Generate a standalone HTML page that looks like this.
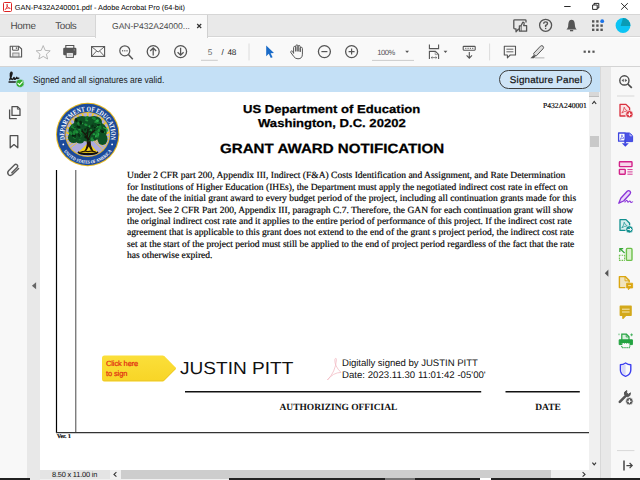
<!DOCTYPE html>
<html>
<head>
<meta charset="utf-8">
<title>GAN-P432A240001.pdf - Adobe Acrobat Pro (64-bit)</title>
<style>
*{box-sizing:border-box;margin:0;padding:0}
html,body{width:640px;height:480px;overflow:hidden;background:#fff}
body{position:relative;font-family:"Liberation Sans",sans-serif;color:#000;text-rendering:geometricPrecision}
.abs{position:absolute}
.t{position:absolute;white-space:nowrap;line-height:1}
svg{position:absolute;overflow:visible}
#titlebar{left:0;top:0;width:640px;height:14px;background:#fff}
#tabbar{left:0;top:14px;width:640px;height:23.4px;background:#e9e9e9;border-bottom:0.8px solid #d6d6d6;border-top:0.7px solid #d6d6d6}
#tab{left:95px;top:14.6px;width:113px;height:24px;background:#f9f9f9;border-right:1px solid #d0d0d0;border-left:1px solid #d6d6d6}
#toolbar{left:0;top:37.6px;width:640px;height:29.2px;background:#f9f9f9;border-bottom:0.8px solid #d4d4d4}
#banner{left:0;top:66.8px;width:600px;height:25px;background:#c4e0f6}
#leftnav{left:0;top:91.8px;width:27px;height:389px;background:#f8f8f8}
#leftgrip{left:27px;top:91.8px;width:13px;height:389px;background:#e8e8e8}
#page{left:40px;top:91.8px;width:549px;height:378.2px;background:#fff}
#vscroll{left:589px;top:91.8px;width:11px;height:378.2px;background:#f0f0f0}
#rightgrip{left:599.6px;top:66.8px;width:11px;height:414px;background:#e8e8e8;border-left:0.8px solid #d8d8d8}
#rightnav{left:610.5px;top:66.8px;width:29.5px;height:414px;background:#f8f8f8}
#hscroll{left:40px;top:470px;width:560px;height:10px;background:#f0f0f0}
.serif{font-family:"Liberation Serif",serif}
</style>
</head>
<body>
<div class="abs" id="titlebar"></div>
<div class="abs" id="tabbar"></div>
<div class="abs" id="tab"></div>
<div class="abs" id="toolbar"></div>
<div class="abs" id="banner"></div>
<div class="abs" id="leftnav"></div>
<div class="abs" id="leftgrip"></div>
<div class="abs" id="page"></div>
<div class="abs" id="vscroll"></div>
<div class="abs" id="rightgrip"></div>
<div class="abs" id="rightnav"></div>
<div class="abs" id="hscroll"></div>

<!-- TITLE BAR -->
<svg style="left:3px;top:2px" width="9" height="10" viewBox="0 0 9 10"><rect x="0.5" y="0.5" width="8" height="9" rx="1" fill="#fff" stroke="#d22" stroke-width="1"/><path d="M2.2 7.6 C3.6 6.2 4.6 3.6 4.3 2.4 C4 1.6 3.6 2.6 4.2 4 C4.9 5.6 6.2 6.6 7.2 6.4 C7.6 6 6 5.8 4.6 6.2 C3.4 6.5 2.4 7.1 2.2 7.6Z" fill="none" stroke="#d22" stroke-width="0.8"/></svg>
<div class="t" id="ttl" style="left:14.8px;top:3.7px;font-size:7.35px">GAN-P432A240001.pdf - Adobe Acrobat Pro (64-bit)</div>
<svg style="left:560px;top:0" width="80" height="14" viewBox="560 0 80 14" fill="none" stroke="#111" stroke-width="0.9">
<path d="M564.2 6.5H570.6"/>
<path d="M592.6 5H597.2V9.4H592.6Z M594 5V3.4H598.8V8H597.2"/>
<path d="M621.2 3.2L627.8 9.6M627.8 3.2L621.2 9.6"/>
</svg>

<!-- TAB BAR -->
<div class="t" id="home" style="left:10.4px;top:22.2px;font-size:9.9px;color:#4a4a4a;letter-spacing:-0.25px">Home</div>
<div class="t" id="tools" style="left:55.3px;top:22.2px;font-size:9.9px;color:#4a4a4a;letter-spacing:-0.4px">Tools</div>
<div class="t" id="tabtxt" style="left:112px;top:21.6px;font-size:8.55px;color:#4a4a4a">GAN-P432A24000...</div>
<svg style="left:195px;top:22px" width="8" height="8" viewBox="195 22 8 8" stroke="#333" stroke-width="1" fill="none"><path d="M197.2 24L201.2 28M201.2 24L197.2 28" stroke-width="1.2"/></svg>
<svg id="tabicons" style="left:500px;top:14px" width="140" height="24" viewBox="500 14 140 24" fill="none" stroke="#555" stroke-width="1.1">
<!-- feedback -->
<path d="M526 22.6V20.6Q526 19.8 525.2 19.8H514.6Q513.8 19.8 513.8 20.6V28Q513.8 28.8 514.6 28.8H516V31.8L518.8 28.8" stroke-width="1.3" stroke-linejoin="round"/>
<path d="M519.4 31.2V25.8H521L522.8 22.2Q524.4 22.2 524.1 24L523.7 25.6H526.6V31.2Z" fill="#e9e9e9" stroke-width="1.3" stroke-linejoin="round"/>
<path d="M521.2 25.8V31.2" stroke-width="0.9"/>
<!-- help -->
<circle cx="545.6" cy="25.3" r="6" stroke-width="1.3"/>
<path d="M543.7 23.7Q543.7 21.9 545.6 21.9Q547.5 21.9 547.5 23.5Q547.5 24.6 545.6 25.5V26.9" stroke-width="1.4"/>
<rect x="545" y="27.8" width="1.3" height="1.3" fill="#555" stroke="none"/>
<!-- bell -->
<path d="M571.6 19.8C568.6 19.8 568.4 23 568.2 26C568 28 567 28.8 566.4 29.6H576.8C576.2 28.8 575.2 28 575 26C574.8 23 574.6 19.8 571.6 19.8Z" fill="#555" stroke="none"/>
<path d="M570 30.6H573.2" stroke-width="1.4"/>
<!-- grid -->
<g fill="#555" stroke="none">
<rect x="592" y="20.2" width="2.4" height="2.4"/><rect x="596.2" y="20.2" width="2.4" height="2.4"/>
<rect x="592" y="24.4" width="2.4" height="2.4"/><rect x="596.2" y="24.4" width="2.4" height="2.4"/><rect x="600.4" y="24.4" width="2.4" height="2.4"/>
<rect x="592" y="28.6" width="2.4" height="2.4"/><rect x="596.2" y="28.6" width="2.4" height="2.4"/><rect x="600.4" y="28.6" width="2.4" height="2.4"/>
<circle cx="602.2" cy="21.2" r="1.9" fill="#1a73e8"/>
</g>
<!-- avatar -->
<circle cx="623" cy="25.5" r="7.4" fill="#0cc4f4" stroke="none"/>
<path d="M623 18.1A7.4 7.4 0 0 1 630.4 26H620.6Z" fill="#0a9bb5" stroke="none"/>
</svg>

<!-- TOOLBAR -->
<svg id="tbicons" style="left:0;top:38px" width="640" height="28" viewBox="0 38 640 28" fill="none" stroke="#555" stroke-width="1.1">
<!-- save -->
<path d="M10.2 46.3H18.8L21.6 49V57H10.2Z" stroke-linejoin="round"/>
<path d="M12.6 46.3V50.2H18.4V46.3" stroke-width="1"/>
<rect x="15.8" y="47.2" width="1.4" height="1.8" fill="#777" stroke="none"/>
<rect x="12.8" y="53" width="6.2" height="3.8" fill="#ddd" stroke="#777" stroke-width="0.8"/>
<!-- star -->
<path d="M43.2 45.6L45.2 50.4L50.2 50.8L46.4 54.2L47.6 59L43.2 56.4L38.8 59L40 54.2L36.2 50.8L41.2 50.4Z" stroke="#b0b0b0" stroke-width="0.9"/>
<!-- printer -->
<path d="M65.8 48V45.5H73.8V48" stroke-width="1.1"/>
<rect x="63.2" y="47.8" width="13.2" height="7.4" rx="1.2" fill="#555" stroke="none"/>
<rect x="66.2" y="52.6" width="7.2" height="4.8" fill="#f4f4f4" stroke="#555" stroke-width="1"/>
<path d="M67.8 55H71.8" stroke="#aaa" stroke-width="0.8"/>
<rect x="73.6" y="49.4" width="1.4" height="1" fill="#999" stroke="none"/>
<!-- mail -->
<rect x="91.6" y="46.6" width="13" height="9.8" stroke-width="1.1"/>
<path d="M91.6 46.6L98.1 52L104.6 46.6M91.6 56.4L96.6 51M104.6 56.4L99.6 51" stroke-width="0.9"/>
<!-- search -->
<circle cx="124.8" cy="50.8" r="5" stroke-width="1.2"/>
<path d="M128.4 54.6L132.8 59.2" stroke-width="1.5"/>
<g fill="#555" stroke="none"><rect x="122" y="50.2" width="1.2" height="1.2"/><rect x="124.2" y="50.2" width="1.2" height="1.2"/><rect x="126.4" y="50.2" width="1.2" height="1.2"/></g>
<!-- up -->
<circle cx="153.2" cy="51.6" r="6" stroke-width="1.3"/>
<path d="M153.2 55.4V48.2M150.2 51L153.2 48L156.2 51" stroke-width="1.25"/>
<!-- down -->
<circle cx="180.6" cy="51.6" r="6" stroke-width="1.3"/>
<path d="M180.6 47.8V55M177.6 52.2L180.6 55.2L183.6 52.2" stroke-width="1.25"/>
<!-- page underline -->
<path d="M201 60.3H217.8" stroke="#b8b8b8" stroke-width="0.7"/>
<!-- sep -->
<path d="M249 43.5V60.4" stroke="#dcdcdc" stroke-width="1"/>
<!-- cursor -->
<path d="M266.2 45.4V56.2L268.8 53.8L270.8 58L272.6 57.2L270.6 53.2L274 53Z" fill="#1a6bc8" stroke="none"/>
<!-- hand -->
<path d="M293.6 53.4V47.6Q293.6 46.4 294.7 46.4Q295.8 46.4 295.8 47.6V51.4M295.8 51.4V46Q295.8 44.9 296.9 44.9Q298 44.9 298 46V51.4M298 51.4V46.6Q298 45.5 299.1 45.5Q300.2 45.5 300.2 46.6V51.8M300.2 51.8V48.4Q300.2 47.3 301.3 47.3Q302.4 47.3 302.4 48.4V54.2Q302.4 58.8 298 58.8Q295.4 58.8 293.8 56.6L290.8 52.4Q290.4 51.4 291.4 51Q292.2 50.8 292.8 51.6L293.6 53.4" stroke-width="1" stroke-linejoin="round"/>
<!-- minus -->
<circle cx="324.4" cy="51.6" r="6" stroke-width="1.3"/>
<path d="M321.4 51.6H327.4" stroke-width="1.2"/>
<!-- plus -->
<circle cx="351.6" cy="51.6" r="6" stroke-width="1.3"/>
<path d="M348.6 51.6H354.6M351.6 48.6V54.6" stroke-width="1.2"/>
<!-- zoom underline & triangle -->
<path d="M372 60.4H414" stroke="#b8b8b8" stroke-width="0.7"/>
<path d="M405.2 50.8H409L407.1 53Z" fill="#555" stroke="none"/>
<!-- fit -->
<path d="M429.4 44.5V48.6H438.6V44.5" stroke-width="1.1"/>
<path d="M429.4 59V51.4H435.4L438.6 54.4V59" stroke-width="1.1"/>
<path d="M435.2 51.6V54.6H438.4" stroke-width="0.8" stroke="#888"/>
<path d="M431.4 57.6H436.6M432.4 56.6L431.2 57.6L432.4 58.6M435.6 56.6L436.8 57.6L435.6 58.6" stroke-width="0.7"/>
<path d="M443.6 50.8H447.4L445.5 53Z" fill="#555" stroke="none"/>
<!-- scroll -->
<rect x="463.2" y="46.4" width="12" height="3.8" rx="0.6" stroke-width="1.1"/>
<path d="M465.2 48.3H473.4" stroke-width="1" stroke-dasharray="1.2 1.1"/>
<path d="M469.3 52V58.2M466.6 55.4L469.3 58.2L472 55.4" stroke-width="1.1"/>
<!-- sep -->
<path d="M489.6 43.5V60.4" stroke="#dcdcdc" stroke-width="1"/>
<!-- comment -->
<path d="M504.3 46.3H515.5V55H510.2L507.4 57.8V55H504.3Z" stroke-width="1.1" stroke-linejoin="round"/>
<path d="M506.4 49.2H513.4M506.4 51.8H513.4" stroke-width="0.9"/>
<!-- highlighter -->
<path d="M534.4 55.4L533.6 53.4L540.4 46.2Q541.8 45 543 46.2Q544.2 47.4 543 48.8L536.4 55.8Z" stroke-width="1" fill="#ddd"/>
<path d="M533.6 55L530.4 58.2H534L535.6 56.4Z" fill="#555" stroke="none"/>
<path d="M535 57.8H544.4" stroke="#ccc" stroke-width="1.6"/>
<!-- dots -->
<g fill="#555" stroke="none"><rect x="583.6" y="50.6" width="2.2" height="2.2"/><rect x="588" y="50.6" width="2.2" height="2.2"/><rect x="592.4" y="50.6" width="2.2" height="2.2"/></g>
</svg>
<div class="t" id="pg5" style="left:207.7px;top:48.5px;font-size:8.2px;color:#666">5</div>
<div class="t" id="pg48" style="left:221.6px;top:48.5px;font-size:8.2px;color:#222;letter-spacing:-0.3px">/&nbsp;&nbsp;48</div>
<div class="t" id="zm" style="left:377.2px;top:48.9px;font-size:7.6px;color:#555;letter-spacing:-0.45px">100%</div>

<!-- BANNER -->
<div class="t" id="signed" style="left:32.5px;top:75.9px;font-size:9.6px;color:#1c1c1c;transform-origin:0 0;transform:scaleX(0.879)">Signed and all signatures are valid.</div>

<!-- DOCUMENT -->
<style>
.bl{font-size:9.545px;color:#000;-webkit-text-stroke:0.18px #000}
.hd{transform-origin:0 0;transform:scaleX(1.137);-webkit-text-stroke:0.25px #000}
.hd{font-weight:bold;color:#000}
</style>
<svg id="seal" style="left:52px;top:98px" width="72" height="72" viewBox="52 98 72 72">
<defs><path id="arcT" d="M65.19 140.53A23.3 23.3 0 1 1 110.21 140.53"/><path id="arcB" d="M62.94 149.97A29.2 29.2 0 0 0 112.46 149.97"/><clipPath id="inn"><circle cx="87.7" cy="134.5" r="21.6"/></clipPath></defs>
<circle cx="87.7" cy="134.5" r="31.7" fill="#e6b820"/>
<circle cx="87.7" cy="134.5" r="30.7" fill="#1b4a9b"/>
<circle cx="87.7" cy="134.5" r="22.5" fill="#e6b820"/>
<circle cx="87.7" cy="134.5" r="21.7" fill="#adacde"/>
<g clip-path="url(#inn)"><path d="M87.7 142.5L109.5 133.1L109.3 131.3Z" fill="#f4c81e"/><path d="M87.7 142.5L108.5 127.9L107.9 126.2Z" fill="#f4c81e"/><path d="M87.7 142.5L106.3 123.1L105.2 121.6Z" fill="#f4c81e"/><path d="M87.7 142.5L103.0 118.9L101.6 117.7Z" fill="#f4c81e"/><path d="M87.7 142.5L98.7 115.7L97.1 114.8Z" fill="#f4c81e"/><path d="M87.7 142.5L93.9 113.6L92.1 113.1Z" fill="#f4c81e"/><path d="M87.7 142.5L88.6 112.7L86.8 112.7Z" fill="#f4c81e"/><path d="M87.7 142.5L83.3 113.1L81.5 113.6Z" fill="#f4c81e"/><path d="M87.7 142.5L78.3 114.8L76.7 115.7Z" fill="#f4c81e"/><path d="M87.7 142.5L73.8 117.7L72.4 118.9Z" fill="#f4c81e"/><path d="M87.7 142.5L70.2 121.6L69.1 123.1Z" fill="#f4c81e"/><path d="M87.7 142.5L67.5 126.2L66.9 127.9Z" fill="#f4c81e"/><path d="M87.7 142.5L66.1 131.3L65.9 133.1Z" fill="#f4c81e"/><path d="M79.7 135.3L66.0 136.8" stroke="#f4c81e" stroke-width="0.8"/><path d="M79.9 136.4L66.5 139.8" stroke="#f4c81e" stroke-width="0.8"/><path d="M80.3 137.5L67.5 142.7" stroke="#f4c81e" stroke-width="0.8"/><path d="M80.8 138.5L68.8 145.4" stroke="#f4c81e" stroke-width="0.8"/><path d="M81.4 139.4L70.5 147.9" stroke="#f4c81e" stroke-width="0.8"/><path d="M93.3 140.3L102.8 150.2" stroke="#f4c81e" stroke-width="0.8"/><path d="M94.0 139.4L104.9 147.9" stroke="#f4c81e" stroke-width="0.8"/><path d="M94.6 138.5L106.6 145.4" stroke="#f4c81e" stroke-width="0.8"/><path d="M95.1 137.5L107.9 142.7" stroke="#f4c81e" stroke-width="0.8"/><path d="M95.5 136.4L108.9 139.8" stroke="#f4c81e" stroke-width="0.8"/><path d="M95.7 135.3L109.4 136.8" stroke="#f4c81e" stroke-width="0.8"/>
<ellipse cx="88" cy="152.6" rx="10.5" ry="2.6" fill="#0d0d0d"/>
<path d="M78.6 152Q84 147 87.4 143.4L89.6 143.4Q93 147 97.6 152Q88 154.2 78.6 152Z" fill="#f6d318"/>
<path d="M84 151.4Q87.6 146.6 86.6 140.4L84.2 137L86.4 136.4L88.2 139.6L90.4 135.8L92.6 136.4L90.6 140.8Q90.4 146.4 93.4 151.2L91 150.4L88.8 146.6L86.6 150.6Z" fill="#21150b"/>
<path d="M80.4 152.2Q84.4 150.6 88 151.6Q92 150.4 96 152.2" stroke="#21150b" stroke-width="1.1" fill="none"/>
<ellipse cx="88" cy="127.5" rx="13.5" ry="11" fill="#0e5224"/><ellipse cx="77.5" cy="131" rx="9" ry="8.5" fill="#0e5224"/><ellipse cx="98.5" cy="131" rx="8.5" ry="8.5" fill="#0e5224"/><ellipse cx="82" cy="122" rx="8" ry="6" fill="#0e5224"/><ellipse cx="94" cy="122" rx="8" ry="6" fill="#0e5224"/><ellipse cx="73.5" cy="137.5" rx="5.5" ry="5.5" fill="#0e5224"/><ellipse cx="102.5" cy="139" rx="5" ry="6" fill="#0e5224"/><ellipse cx="88" cy="135" rx="13" ry="6.5" fill="#0e5224"/><ellipse cx="80" cy="140" rx="4" ry="3.5" fill="#0e5224"/><ellipse cx="75.2" cy="132.8" rx="2.2" ry="1.4" fill="#0a3316" transform="rotate(81 75.2 132.8)"/><ellipse cx="92.5" cy="125.9" rx="2.0" ry="1.3" fill="#0a3316" transform="rotate(113 92.5 125.9)"/><ellipse cx="89.3" cy="126.6" rx="1.4" ry="0.9" fill="#229c40" transform="rotate(97 89.3 126.6)"/><ellipse cx="99.1" cy="123.6" rx="1.8" ry="1.2" fill="#1a8534" transform="rotate(174 99.1 123.6)"/><ellipse cx="80.0" cy="121.8" rx="1.2" ry="0.8" fill="#1c9038" transform="rotate(150 80.0 121.8)"/><ellipse cx="90.7" cy="130.8" rx="2.1" ry="1.4" fill="#06200d" transform="rotate(5 90.7 130.8)"/><ellipse cx="76.5" cy="131.9" rx="2.1" ry="1.4" fill="#1e9139" transform="rotate(42 76.5 131.9)"/><ellipse cx="87.7" cy="130.6" rx="1.1" ry="0.7" fill="#0d4a20" transform="rotate(50 87.7 130.6)"/><ellipse cx="106.5" cy="129.8" rx="2.1" ry="1.4" fill="#2aac4c" transform="rotate(57 106.5 129.8)"/><ellipse cx="89.2" cy="136.5" rx="1.1" ry="0.7" fill="#229c40" transform="rotate(72 89.2 136.5)"/><ellipse cx="94.3" cy="123.7" rx="2.2" ry="1.5" fill="#0d4a20" transform="rotate(0 94.3 123.7)"/><ellipse cx="70.0" cy="132.4" rx="1.5" ry="1.0" fill="#229c40" transform="rotate(102 70.0 132.4)"/><ellipse cx="92.7" cy="139.9" rx="1.4" ry="0.9" fill="#2aac4c" transform="rotate(60 92.7 139.9)"/><ellipse cx="103.5" cy="127.5" rx="1.2" ry="0.7" fill="#0c3f1a" transform="rotate(127 103.5 127.5)"/><ellipse cx="100.1" cy="130.6" rx="1.6" ry="1.1" fill="#0d4a20" transform="rotate(101 100.1 130.6)"/><ellipse cx="81.0" cy="131.7" rx="2.0" ry="1.3" fill="#157a2e" transform="rotate(75 81.0 131.7)"/><ellipse cx="79.7" cy="135.2" rx="2.3" ry="1.5" fill="#1c9038" transform="rotate(49 79.7 135.2)"/><ellipse cx="104.1" cy="127.9" rx="1.4" ry="0.9" fill="#1c9038" transform="rotate(38 104.1 127.9)"/><ellipse cx="74.6" cy="137.3" rx="1.8" ry="1.2" fill="#229c40" transform="rotate(8 74.6 137.3)"/><ellipse cx="95.2" cy="136.6" rx="1.0" ry="0.7" fill="#06200d" transform="rotate(59 95.2 136.6)"/><ellipse cx="86.7" cy="133.0" rx="1.1" ry="0.7" fill="#06200d" transform="rotate(115 86.7 133.0)"/><ellipse cx="98.6" cy="130.7" rx="1.8" ry="1.2" fill="#157a2e" transform="rotate(173 98.6 130.7)"/><ellipse cx="74.4" cy="131.0" rx="2.1" ry="1.4" fill="#157a2e" transform="rotate(113 74.4 131.0)"/><ellipse cx="84.9" cy="135.4" rx="1.8" ry="1.2" fill="#0c3f1a" transform="rotate(29 84.9 135.4)"/><ellipse cx="78.8" cy="123.2" rx="1.9" ry="1.2" fill="#1a8534" transform="rotate(159 78.8 123.2)"/><ellipse cx="78.8" cy="125.1" rx="1.1" ry="0.7" fill="#1c9038" transform="rotate(92 78.8 125.1)"/><ellipse cx="79.1" cy="135.1" rx="2.2" ry="1.4" fill="#0a3316" transform="rotate(53 79.1 135.1)"/><ellipse cx="95.0" cy="139.7" rx="1.1" ry="0.7" fill="#0c3f1a" transform="rotate(86 95.0 139.7)"/><ellipse cx="79.9" cy="121.8" rx="1.1" ry="0.7" fill="#0c3f1a" transform="rotate(165 79.9 121.8)"/><ellipse cx="88.6" cy="131.3" rx="1.3" ry="0.9" fill="#0a3316" transform="rotate(45 88.6 131.3)"/><ellipse cx="96.8" cy="131.9" rx="1.7" ry="1.1" fill="#157a2e" transform="rotate(17 96.8 131.9)"/><ellipse cx="95.7" cy="136.4" rx="1.4" ry="0.9" fill="#1e9139" transform="rotate(105 95.7 136.4)"/><ellipse cx="89.9" cy="131.6" rx="1.0" ry="0.7" fill="#07260f" transform="rotate(126 89.9 131.6)"/><ellipse cx="90.2" cy="129.6" rx="1.8" ry="1.2" fill="#0a3316" transform="rotate(12 90.2 129.6)"/><ellipse cx="85.7" cy="134.0" rx="1.1" ry="0.7" fill="#0a3316" transform="rotate(98 85.7 134.0)"/><ellipse cx="86.6" cy="117.8" rx="2.0" ry="1.3" fill="#157a2e" transform="rotate(143 86.6 117.8)"/><ellipse cx="97.0" cy="126.3" rx="1.9" ry="1.2" fill="#229c40" transform="rotate(157 97.0 126.3)"/><ellipse cx="73.9" cy="135.7" rx="2.1" ry="1.4" fill="#06200d" transform="rotate(3 73.9 135.7)"/><ellipse cx="82.3" cy="123.5" rx="1.0" ry="0.7" fill="#229c40" transform="rotate(14 82.3 123.5)"/><ellipse cx="76.2" cy="120.1" rx="2.1" ry="1.4" fill="#07260f" transform="rotate(70 76.2 120.1)"/><ellipse cx="86.7" cy="120.4" rx="1.6" ry="1.0" fill="#1e9139" transform="rotate(15 86.7 120.4)"/><ellipse cx="88.0" cy="128.1" rx="1.8" ry="1.2" fill="#0a3316" transform="rotate(4 88.0 128.1)"/><ellipse cx="93.4" cy="129.0" rx="2.0" ry="1.3" fill="#0d4a20" transform="rotate(166 93.4 129.0)"/><ellipse cx="87.9" cy="131.1" rx="1.4" ry="0.9" fill="#0d4a20" transform="rotate(110 87.9 131.1)"/><ellipse cx="72.3" cy="128.7" rx="1.4" ry="0.9" fill="#0a3316" transform="rotate(90 72.3 128.7)"/><ellipse cx="88.6" cy="137.9" rx="1.3" ry="0.9" fill="#0d4a20" transform="rotate(78 88.6 137.9)"/><ellipse cx="94.1" cy="118.4" rx="2.1" ry="1.4" fill="#1a8534" transform="rotate(40 94.1 118.4)"/><ellipse cx="94.9" cy="127.4" rx="1.2" ry="0.8" fill="#07260f" transform="rotate(151 94.9 127.4)"/><ellipse cx="96.9" cy="121.2" rx="2.2" ry="1.5" fill="#2aac4c" transform="rotate(148 96.9 121.2)"/><ellipse cx="97.3" cy="135.6" rx="2.2" ry="1.4" fill="#1a8534" transform="rotate(69 97.3 135.6)"/><ellipse cx="73.2" cy="128.7" rx="1.9" ry="1.3" fill="#06200d" transform="rotate(81 73.2 128.7)"/><ellipse cx="90.5" cy="130.9" rx="2.1" ry="1.4" fill="#1c9038" transform="rotate(122 90.5 130.9)"/><ellipse cx="86.0" cy="137.2" rx="1.8" ry="1.2" fill="#06200d" transform="rotate(3 86.0 137.2)"/><ellipse cx="95.9" cy="136.4" rx="1.0" ry="0.7" fill="#2aac4c" transform="rotate(43 95.9 136.4)"/><ellipse cx="90.2" cy="131.9" rx="1.8" ry="1.2" fill="#0a3316" transform="rotate(20 90.2 131.9)"/><ellipse cx="73.9" cy="127.8" rx="1.5" ry="1.0" fill="#229c40" transform="rotate(123 73.9 127.8)"/><ellipse cx="91.8" cy="138.2" rx="1.2" ry="0.8" fill="#1c9038" transform="rotate(136 91.8 138.2)"/><ellipse cx="85.1" cy="129.5" rx="1.3" ry="0.8" fill="#07260f" transform="rotate(97 85.1 129.5)"/><ellipse cx="99.9" cy="127.1" rx="2.3" ry="1.5" fill="#157a2e" transform="rotate(71 99.9 127.1)"/><ellipse cx="92.6" cy="118.1" rx="1.1" ry="0.7" fill="#1a8534" transform="rotate(23 92.6 118.1)"/><ellipse cx="74.3" cy="132.9" rx="2.2" ry="1.4" fill="#1a8534" transform="rotate(99 74.3 132.9)"/><ellipse cx="80.7" cy="122.7" rx="2.1" ry="1.3" fill="#07260f" transform="rotate(83 80.7 122.7)"/><ellipse cx="83.5" cy="125.6" rx="1.9" ry="1.3" fill="#0d4a20" transform="rotate(166 83.5 125.6)"/><ellipse cx="94.1" cy="134.2" rx="1.5" ry="1.0" fill="#229c40" transform="rotate(176 94.1 134.2)"/><ellipse cx="72.2" cy="127.4" rx="1.4" ry="0.9" fill="#1c9038" transform="rotate(63 72.2 127.4)"/><ellipse cx="98.2" cy="134.1" rx="1.7" ry="1.1" fill="#2aac4c" transform="rotate(88 98.2 134.1)"/><ellipse cx="104.2" cy="132.1" rx="1.1" ry="0.7" fill="#1c9038" transform="rotate(31 104.2 132.1)"/><ellipse cx="79.7" cy="139.8" rx="1.2" ry="0.8" fill="#157a2e" transform="rotate(180 79.7 139.8)"/><ellipse cx="98.5" cy="124.7" rx="1.9" ry="1.2" fill="#0a3316" transform="rotate(170 98.5 124.7)"/><ellipse cx="70.0" cy="130.6" rx="1.1" ry="0.7" fill="#0c3f1a" transform="rotate(79 70.0 130.6)"/><ellipse cx="72.4" cy="125.8" rx="1.7" ry="1.1" fill="#157a2e" transform="rotate(94 72.4 125.8)"/><ellipse cx="95.5" cy="122.1" rx="1.4" ry="0.9" fill="#1a8534" transform="rotate(172 95.5 122.1)"/><ellipse cx="97.6" cy="122.8" rx="1.4" ry="0.9" fill="#157a2e" transform="rotate(174 97.6 122.8)"/><ellipse cx="74.5" cy="128.5" rx="1.3" ry="0.8" fill="#1e9139" transform="rotate(21 74.5 128.5)"/><ellipse cx="98.8" cy="130.2" rx="1.7" ry="1.1" fill="#1c9038" transform="rotate(93 98.8 130.2)"/><ellipse cx="74.7" cy="136.7" rx="1.7" ry="1.1" fill="#0a3316" transform="rotate(17 74.7 136.7)"/><ellipse cx="70.9" cy="133.2" rx="2.0" ry="1.3" fill="#1a8534" transform="rotate(48 70.9 133.2)"/><ellipse cx="82.1" cy="130.7" rx="1.6" ry="1.0" fill="#0a3316" transform="rotate(94 82.1 130.7)"/><ellipse cx="96.9" cy="135.1" rx="1.0" ry="0.7" fill="#2aac4c" transform="rotate(23 96.9 135.1)"/><ellipse cx="88.4" cy="128.4" rx="1.3" ry="0.8" fill="#0c3f1a" transform="rotate(2 88.4 128.4)"/><ellipse cx="88.4" cy="138.9" rx="1.6" ry="1.1" fill="#06200d" transform="rotate(22 88.4 138.9)"/><ellipse cx="79.4" cy="129.6" rx="1.3" ry="0.8" fill="#1e9139" transform="rotate(158 79.4 129.6)"/><ellipse cx="102.2" cy="131.5" rx="2.1" ry="1.3" fill="#06200d" transform="rotate(29 102.2 131.5)"/><ellipse cx="92.1" cy="139.7" rx="1.8" ry="1.2" fill="#1e9139" transform="rotate(39 92.1 139.7)"/><ellipse cx="74.7" cy="127.4" rx="1.2" ry="0.8" fill="#0d4a20" transform="rotate(146 74.7 127.4)"/><ellipse cx="96.0" cy="126.0" rx="1.4" ry="0.9" fill="#0c3f1a" transform="rotate(39 96.0 126.0)"/><ellipse cx="105.3" cy="129.9" rx="1.2" ry="0.8" fill="#0c3f1a" transform="rotate(24 105.3 129.9)"/><ellipse cx="97.3" cy="134.1" rx="1.6" ry="1.0" fill="#1a8534" transform="rotate(98 97.3 134.1)"/><ellipse cx="85.9" cy="124.8" rx="1.8" ry="1.2" fill="#1c9038" transform="rotate(17 85.9 124.8)"/><ellipse cx="78.5" cy="126.9" rx="2.1" ry="1.3" fill="#07260f" transform="rotate(21 78.5 126.9)"/><ellipse cx="72.1" cy="129.6" rx="1.7" ry="1.1" fill="#0d4a20" transform="rotate(150 72.1 129.6)"/><path d="M88 141L86 135L82 131M88 140L90.5 134L95 130M87.4 137L88 129" stroke="#1c120a" stroke-width="1.1" fill="none"/>
</g>
<text font-family="Liberation Serif,serif" font-weight="bold" font-size="7.1" fill="#fff" text-anchor="middle"><textPath href="#arcT" startOffset="50%" textLength="83.5" lengthAdjust="spacingAndGlyphs">DEPARTMENT OF EDUCATION</textPath></text>
<text font-family="Liberation Serif,serif" font-weight="bold" font-size="4.7" fill="#fff" text-anchor="middle"><textPath href="#arcB" startOffset="50%" textLength="56" lengthAdjust="spacingAndGlyphs">UNITED STATES OF AMERICA</textPath></text>
<circle cx="63.3" cy="144.4" r="0.9" fill="#fff"/>
<circle cx="112.1" cy="144.4" r="0.9" fill="#fff"/>
</svg>
<div class="t hd" id="h1" style="left:242.5px;top:105.4px;font-size:11.5px">US Department of Education</div>
<div class="t hd" id="h2" style="left:258px;top:118.8px;font-size:11.5px">Washington, D.C. 20202</div>
<div class="t hd" id="h3" style="left:220px;top:141.7px;font-size:13.3px">GRANT AWARD NOTIFICATION</div>
<div class="t serif" id="pnum" style="left:543px;top:101.5px;font-size:7.6px;color:#000;-webkit-text-stroke:0.15px #000">P432A240001</div>
<div class="t serif bl" id="b1" style="left:127px;top:170.70px">Under 2 CFR part 200, Appendix III, Indirect (F&amp;A) Costs Identification and Assignment, and Rate Determination</div>
<div class="t serif bl" id="b2" style="left:127px;top:182.70px">for Institutions of Higher Education (IHEs), the Department must apply the negotiated indirect cost rate in effect on</div>
<div class="t serif bl" id="b3" style="left:127px;top:193.70px">the date of the initial grant award to every budget period of the project, including all continuation grants made for this</div>
<div class="t serif bl" id="b4" style="left:127px;top:205.70px">project. See 2 CFR Part 200, Appendix III, paragraph C.7. Therefore, the GAN for each continuation grant will show</div>
<div class="t serif bl" id="b5" style="left:127px;top:216.70px">the original indirect cost rate and it applies to the entire period of performance of this project. If the indirect cost rate</div>
<div class="t serif bl" id="b6" style="left:127px;top:227.70px">agreement that is applicable to this grant does not extend to the end of the grant s project period, the indirect cost rate</div>
<div class="t serif bl" id="b7" style="left:127px;top:239.70px">set at the start of the project period must still be applied to the end of project period regardless of the fact that the rate</div>
<div class="t serif bl" id="b8" style="left:127px;top:250.70px">has otherwise expired.</div>

<svg id="doclines" style="left:40px;top:91px" width="549" height="379" viewBox="40 91 549 379" fill="none">
<path d="M56.5 170V433" stroke="#000" stroke-width="1.2"/>
<path d="M75.8 170V433" stroke="#333" stroke-width="0.9"/>
<path d="M56 432.6H589" stroke="#333" stroke-width="1.1"/>
<path d="M185 391.8H481.2" stroke="#111" stroke-width="1.4"/>
<path d="M505.5 391.8H579.8" stroke="#111" stroke-width="1.4"/>
<!-- click here tag -->
<path d="M104.5 355.4H162.6Q163.6 355.4 164.3 356.1L175.6 367.5Q176.4 368.4 175.6 369.3L164.3 380.7Q163.6 381.4 162.6 381.4H104.5Q102 381.4 102 378.9V357.9Q102 355.4 104.5 355.4Z" fill="url(#tagg)"/><defs><linearGradient id="tagg" x1="0" y1="0" x2="0" y2="1"><stop offset="0" stop-color="#fbdf3a"/><stop offset="1" stop-color="#f8d526"/></linearGradient></defs>
<path d="M103 380.6H163.4L175.4 368.8" stroke="#ecc82a" stroke-width="0.9"/>
<!-- adobe watermark -->
<path d="M327.4 380Q335.4 372 336.4 360Q336 356.6 334.8 359.6Q334.4 366 341 372.4Q333 372.6 327.4 380Z" stroke="#f2bcc5" stroke-width="0.8"/>
</svg>
<div class="t" id="click1" style="left:106px;top:359.9px;font-size:7.5px;color:#e22a12;letter-spacing:-0.12px;-webkit-text-stroke:0.2px #e22a12">Click here</div>
<div class="t" id="click2" style="left:106px;top:369.7px;font-size:7.5px;color:#e22a12;letter-spacing:-0.12px;-webkit-text-stroke:0.2px #e22a12">to sign</div>
<div class="t" id="jp" style="left:179.5px;top:360.1px;font-size:17.5px;color:#111;transform-origin:0 0;transform:scaleX(1.09)">JUSTIN PITT</div>
<div class="t" id="ds1" style="left:342px;top:359.2px;font-size:9.6px;letter-spacing:-0.04px;color:#111">Digitally signed by JUSTIN PITT</div>
<div class="t" id="ds2" style="left:342px;top:371.4px;font-size:9.6px;letter-spacing:0.02px;color:#111">Date: 2023.11.30 11:01:42 -05'00'</div>
<div class="t serif" id="auth" style="left:279.5px;top:404.4px;font-size:9.46px;font-weight:bold;color:#111">AUTHORIZING OFFICIAL</div>
<div class="t serif" id="date" style="left:535.2px;top:404.4px;font-size:9.46px;font-weight:bold;color:#111">DATE</div>
<div class="t serif" id="ver" style="left:57px;top:434.9px;font-size:5.7px;font-weight:bold;color:#000;-webkit-text-stroke:0.2px #000">Ver. 1</div>

<!-- SCROLLBARS -->
<div class="abs" style="left:589px;top:92px;width:10.4px;height:4.6px;background:#d8d8d8;border-bottom:0.8px solid #bdbdbd"></div>
<div class="abs" style="left:589.8px;top:136px;width:8.8px;height:10.6px;background:#c9c9c9"></div>
<div class="abs" style="left:40px;top:470px;width:70px;height:9px;background:#e4e4e4"></div>
<div class="abs" style="left:121px;top:470px;width:429.5px;height:9px;background:#cdcdcd"></div>
<div class="t" id="psize" style="left:52px;top:471.2px;font-size:7.4px;color:#111;letter-spacing:-0.19px">8.50 x 11.00 in</div>
<svg style="left:40px;top:91px" width="560" height="389" viewBox="40 91 560 389" fill="none" stroke="#333" stroke-width="1.1">
<path d="M592.2 104L594.2 101.4L596.2 104"/>
<path d="M592.4 462.6L594.2 464.8L596 462.6"/>
<path d="M116.4 472.2L114 474.4L116.4 476.6"/>
<path d="M582.6 472.2L585 474.4L582.6 476.6"/>
</svg>
<div class="abs" style="left:0;top:478.4px;width:30px;height:1.6px;background:#222"></div>
<div class="abs" style="left:229px;top:478.4px;width:251px;height:1.6px;background:#222"></div>
<div class="abs" style="left:385px;top:478.4px;width:30px;height:1.6px;background:#777"></div>
<div class="abs" style="left:480px;top:478.4px;width:11px;height:1.6px;background:#fff"></div>
<div class="abs" style="left:491px;top:478.4px;width:149px;height:1.6px;background:#222"></div>

<!-- BANNER ICONS -->
<svg id="sigicon" style="left:4px;top:68px" width="24" height="22" viewBox="4 68 24 22" fill="none" stroke="#1a1a1a" stroke-width="1.2" stroke-linecap="round" stroke-linejoin="round">
<path d="M9.8 79.8Q11.2 76.6 12 73.8Q12.2 72 11.2 72.2Q10 73 10.4 76Q10.8 79.2 12.4 79.4Q13.6 79 14 77.4Q14.2 79.6 15.4 79Q16.4 78.2 16.8 77.4Q17 79.2 18.8 78.2" stroke-width="1.5"/>
<path d="M9 82H17" stroke-width="1.4"/>
<circle cx="20.1" cy="83.3" r="4.1" fill="#34ad2f" stroke="#c4e0f6" stroke-width="0.7"/>
<path d="M18 83.4L19.5 84.9L22.3 81.9" stroke="#fff" stroke-width="1.2"/>
</svg>
<div class="abs" id="sigbtn" style="left:499px;top:70px;width:93px;height:18.6px;border:1.6px solid #3c3c3c;border-radius:9.5px;background:#cfe4f6"></div>
<div class="t" id="sigtxt" style="left:509.8px;top:75.8px;font-size:9.8px;color:#111;letter-spacing:0.19px;-webkit-text-stroke:0.2px #111">Signature Panel</div>

<!-- LEFT NAV -->
<svg id="lefticons" style="left:0;top:91px" width="40" height="389" viewBox="0 91 40 389" fill="none" stroke="#505050" stroke-width="1.3">
<path d="M12 106.6H17.6L20 109V115.4H12Z M9.6 109.4V118.6H16.8" stroke-linejoin="round"/>
<path d="M17.4 106.8V109.2H19.8" stroke-width="0.9"/>
<path d="M10.2 135.6H17.8V147.8L14 144.6L10.2 147.8Z" stroke-width="1.3" stroke-linejoin="round"/>
<path d="M11.8 172.8L17 167.6M17 167.6Q18.4 166 17 164.8Q15.6 163.8 14.4 165L8.6 170.8Q6.8 172.8 8.6 174.8Q10.4 176.4 12.4 174.6L18.6 168.4" stroke-width="1.4" stroke="#5a5a5a" stroke-linecap="round"/>
<path d="M36.1 282.3V289.3L31.9 285.8Z" fill="#666" stroke="none"/>
</svg>

<!-- RIGHT NAV -->
<svg id="righticons" style="left:599px;top:66px" width="41" height="414" viewBox="599 66 41 414" fill="none" stroke-width="1.3">
<path d="M608.4 269.6V276.8L604.8 273.2Z" fill="#555"/>
<!-- zoom/search -->
<g stroke="#4a4a4a"><circle cx="624.4" cy="80.4" r="4.6" stroke-width="1.4"/><path d="M627.8 84L631.8 87.8" stroke-width="1.7"/><path d="M621.8 80.4L623.6 79.2V81.6ZM627 80.4L625.2 79.2V81.6Z" fill="#4a4a4a" stroke-width="0.4"/></g>
<path d="M617 96H634.4" stroke="#d8d8d8" stroke-width="1"/>
<!-- create pdf (red) -->
<g stroke="#d9303e"><path d="M625.6 116H620V104.4H626L629.6 108V110.6" stroke-linejoin="round" fill="#fbe3e5"/><path d="M621.8 113Q624 110.4 624.2 107.2Q624.6 109.6 627.4 111Q624.4 111 621.8 113Z" stroke-width="0.7"/><circle cx="629.4" cy="114.2" r="3.6" fill="#d9303e" stroke="#f8f8f8" stroke-width="0.6"/><path d="M627.4 114.2H631.4M629.4 112.2V116.2" stroke="#fff" stroke-width="1.1"/></g>
<!-- export pdf (blue) -->
<g stroke="#3d45e0"><path d="M625.4 133H629.8L632.6 135.8V141.6H625.4Z" fill="#4a52e6" stroke-linejoin="round" stroke-width="1"/><path d="M618.6 133H625.2V141.2H618.6Z" fill="#fff" stroke-linejoin="round"/><path d="M620.2 139.4Q621.8 137.2 621.9 134.8Q622.3 136.8 624 138.2Q621.8 138.2 620.2 139.4Z" stroke-width="0.6"/><path d="M630 133.4V135.8H632.4" stroke="#fff" stroke-width="0.6"/><path d="M625.2 139.6V143.4" stroke-width="1.8"/><path d="M621.8 143.2H628.8L625.3 146.8Z" fill="#3d45e0" stroke="none"/></g>
<!-- organize (magenta) -->
<g stroke="#d3238a"><rect x="619.4" y="161.8" width="12.6" height="4.8" rx="0.6" stroke-width="1.4" fill="#f7d7ea"/><rect x="619.4" y="169.4" width="5.8" height="4.8" rx="0.4" stroke-width="1.4" fill="#f7d7ea"/><path d="M627.4 169.6H632.6M627.4 171.9H632.6M627.4 174.2H632.6" stroke-width="0.9"/></g>
<!-- sign (purple) -->
<g stroke="#8a33d8"><path d="M618.8 203.2L620.8 198.2L627.2 191.2Q628.6 190 630 191.2Q631.2 192.6 630 194L623.6 201L618.8 203.2Z" stroke-linejoin="round" stroke-width="1.3" fill="#ead9f8"/><path d="M624.6 202.4Q626.4 199.6 627.2 200.8Q627.6 203 628.8 201.6Q630 200.4 630.4 201.8Q631 203 633 201.6" stroke-width="1.1"/></g>
<!-- send (teal) -->
<g stroke="#12908f"><path d="M625.6 230.4H620V219.6H626L629.6 223.2V225.6" stroke-linejoin="round" fill="#d8efee"/><path d="M621.8 227.8Q624 225.2 624.2 222.2Q624.6 224.6 627.4 226Q624.4 226 621.8 227.8Z" stroke-width="0.7"/><circle cx="629.4" cy="229.4" r="3.6" fill="#12908f" stroke="#f8f8f8" stroke-width="0.6"/><path d="M627.4 229.4H631.2M629.8 227.8L631.4 229.4L629.8 231" stroke="#fff" stroke-width="1"/></g>
<!-- compress (green) -->
<g stroke="#6cc04a"><rect x="626.4" y="248.4" width="5.6" height="12" rx="1" fill="#dcf1d0" stroke-width="1.4"/><path d="M619 255.2H625M619 260.4H625M619.4 255V260.6M624.6 255V260.6" stroke-width="1.1" stroke-dasharray="1.6 1"/><path d="M624.6 253L620 248.8M619.8 252V248.6H623.2" stroke="#3aa83c" stroke-width="1.2"/></g>
<!-- comment page (yellow) -->
<g stroke="#dba611"><path d="M625.4 287.6H619.4V276.6H625.2L629.2 280.6V282.6" fill="#f1e4bd" stroke-linejoin="round" stroke-width="1.4"/><path d="M625 276.8V280.8H629" stroke-width="0.9"/><path d="M626.6 283.2H632.6V288H630L628.4 289.8V288H626.6Z" fill="#dba611" stroke-width="0.8" stroke-linejoin="round"/><path d="M628.2 285.6H631" stroke="#f6ecc8" stroke-width="0.9"/></g>
<!-- comment (yellow bubble) -->
<g stroke="#d3a91c"><path d="M620.4 306.2H631V315.2H625.8L623 318.2V315.2H620.4Z" fill="#d3a91c" stroke-linejoin="round" stroke-width="1.6"/><path d="M622 309.2H629.6M622 312H629.6" stroke="#f8e9b8" stroke-width="1"/></g>
<!-- print production (green printer) -->
<g stroke="#23a340"><path d="M621.8 340V334.2H626.4L629 336.8V340" stroke-width="1.2" fill="#d9f0de"/><path d="M626.2 334.4V337H628.8" stroke-width="0.8"/><path d="M619.2 339.8H632.4V344.6H619.2Z" fill="#23a340" stroke-linejoin="round" stroke-width="1"/><rect x="621.8" y="343" width="8" height="4.6" fill="#f8f8f8" stroke-width="1.1" stroke-dasharray="1.2 0.9"/><path d="M631.6 333.4V336.2M630.2 334.8H633" stroke-width="0.7"/><path d="M619 333.6V335.2" stroke-width="0.7"/></g>
<!-- protect (shield) -->
<path d="M625.6 363Q628.2 364.8 630.8 364.8V370Q630.8 374.4 625.6 376.4Q620.4 374.4 620.4 370V364.8Q623 364.8 625.6 363Z" stroke="#3d3ff0" stroke-width="1.4" fill="#fafafa" stroke-linejoin="round"/>
<path d="M625.6 364.2Q623.4 365.6 621.4 365.7V370Q621.4 373.4 625.6 375.2Z" fill="#d9d9f7" stroke="none"/>
<!-- tools wrench -->
<g stroke="#555"><path d="M619.8 401.8L626 395.6" stroke-width="2.6" stroke-linecap="round"/><path d="M624.4 394.4Q623.8 391.6 626.8 390.6L626.6 393.2L628.6 394.2L630.4 392.8Q630.8 396.4 627.2 396.8Z" fill="#555" stroke-width="1" stroke-linejoin="round"/><circle cx="629.4" cy="401.2" r="3.7" fill="#555" stroke="#f8f8f8" stroke-width="0.7"/><path d="M627.4 401.2H631.4M629.4 399.2V403.2" stroke="#fff" stroke-width="1.1"/></g>
<path d="M617 450.6H634.4" stroke="#d8d8d8" stroke-width="1"/>
<g stroke="#444"><path d="M624 460.6V470.6" stroke-width="1.5"/><path d="M626.4 465.6H632M629.6 463L632.2 465.6L629.6 468.2" stroke-width="1.2"/></g>
</svg>

</body>
</html>
